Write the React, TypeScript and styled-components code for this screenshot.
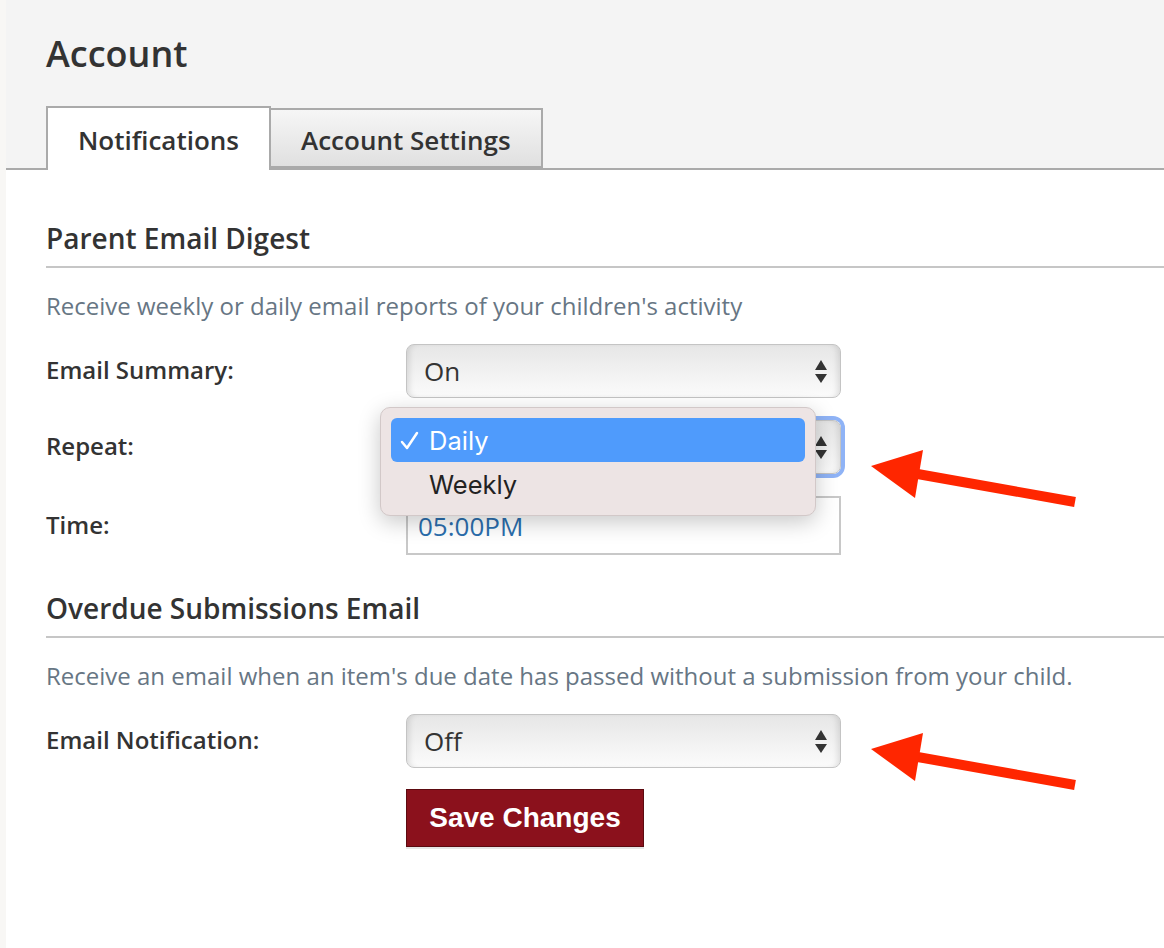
import styled, { createGlobalStyle } from "styled-components";

const GlobalStyle = createGlobalStyle`
  html, body {
    margin: 0;
    padding: 0;
    background: #f8f7f5;
  }
  * {
    box-sizing: border-box;
  }
`;

const Page = styled.div`
  margin-left: 6px;
  min-height: 948px;
  background: #ffffff;
  font-family: "Open Sans", "Noto Sans", sans-serif;
  color: #333333;
  overflow: hidden;
`;

const Header = styled.div`
  background: #f4f4f4;
  border-bottom: 2px solid #aaaaaa;
  padding: 32px 0 0 40px;
  height: 170px;
  display: flex;
  flex-direction: column;
  justify-content: space-between;
`;

const Title = styled.h1`
  margin: 0;
  font-size: 36px;
  line-height: 44px;
  font-weight: 600;
  color: #333333;
`;

const Tabs = styled.div`
  display: flex;
  align-items: flex-end;
  margin-bottom: -2px;
`;

const Tab = styled.div<{ $active?: boolean }>`
  height: ${(p) => (p.$active ? "64px" : "60px")};
  margin-bottom: ${(p) => (p.$active ? "0" : "2px")};
  padding: ${(p) => (p.$active ? "2px 30px 0" : "4px 30px 0")};
  display: flex;
  align-items: center;
  border: 2px solid #aaaaaa;
  border-bottom: ${(p) => (p.$active ? "none" : "2px solid #aaaaaa")};
  border-left: ${(p) => (p.$active ? "2px solid #aaaaaa" : "none")};
  background: ${(p) =>
    p.$active ? "#ffffff" : "linear-gradient(to bottom, #f6f6f6, #e0e0e0)"};
  font-size: 26px;
  font-weight: 600;
  color: #333333;
`;

const Content = styled.div`
  padding: 52px 0 0 40px;
`;

const SectionTitle = styled.h2<{ $first?: boolean }>`
  margin: ${(p) => (p.$first ? "0" : "37px")} 0 0;
  padding-bottom: 12px;
  border-bottom: 2px solid #c6c6c6;
  font-size: 28px;
  line-height: 32px;
  font-weight: 600;
  color: #333333;
`;

const Description = styled.p`
  margin: 24px 0 24px;
  font-size: 24px;
  line-height: 28px;
  color: #677684;
`;

const Row = styled.div`
  position: relative;
  display: grid;
  grid-template-columns: 360px 435px;
  align-items: center;
  margin-bottom: 22px;
`;

const Label = styled.label`
  font-size: 24px;
  font-weight: 600;
  color: #333333;
  margin-top: -3px;
`;

const SelectBox = styled.div<{ $focused?: boolean }>`
  position: relative;
  height: 54px;
  border: 1.5px solid #c4c4c4;
  border-radius: 8px;
  background: linear-gradient(to bottom, #e6e6e6 0%, #f2f2f2 55%, #fbfbfb 100%);
  box-shadow: inset 6px 0 6px -4px rgba(0, 0, 0, 0.12),
    inset -6px 0 6px -4px rgba(0, 0, 0, 0.12)
    ${(p) => (p.$focused ? ", 0 0 0 4px #8fb3f6" : "")};
  display: flex;
  align-items: center;
  justify-content: space-between;
  padding: 0 13px 0 17px;
  font-size: 26px;
  color: #333333;
`;

const TimeInput = styled.div`
  height: 59px;
  border: 2px solid #c8c8c8;
  display: flex;
  align-items: center;
  padding-left: 10px;
  font-size: 26px;
  color: #2b6ead;
`;

const Popup = styled.div`
  position: absolute;
  left: -27px;
  top: -14px;
  width: 436px;
  height: 109px;
  padding: 10px;
  background: #ede4e4;
  border: 1px solid #d2c8c8;
  border-radius: 10px;
  box-shadow: 0 6px 22px rgba(0, 0, 0, 0.22);
  z-index: 2;
  font-family: Inter, "Noto Sans", sans-serif;
`;

const Option = styled.div<{ $selected?: boolean }>`
  height: 44px;
  border-radius: 6px;
  display: flex;
  align-items: center;
  padding-left: 9px;
  font-size: 25.5px;
  color: ${(p) => (p.$selected ? "#ffffff" : "#222222")};
  background: ${(p) => (p.$selected ? "#4f9bfc" : "transparent")};
`;

const CheckSlot = styled.span`
  width: 29px;
  display: flex;
  align-items: center;
`;

const SaveRow = styled.div`
  padding-left: 360px;
  margin-top: -1px;
`;

const SaveButton = styled.button`
  width: 238px;
  height: 58px;
  background: #8b111c;
  border: 1px solid #5c0a10;
  box-shadow: 0 2px 0 #e6e6e6;
  color: #ffffff;
  font-family: "Liberation Sans", Arial, sans-serif;
  font-weight: 700;
  font-size: 28px;
  padding: 0;
`;

const ArrowWrap = styled.div<{ $top: number }>`
  position: absolute;
  left: 816px;
  top: ${(p) => p.$top}px;
  width: 220px;
  height: 70px;
  pointer-events: none;
`;

const Updown = () => (
  <svg width="12" height="23" viewBox="0 0 12 23">
    <path d="M6 0 L12 10 L0 10 Z" fill="#333" />
    <path d="M0 14 L12 14 L6 23 Z" fill="#333" />
  </svg>
);

const CheckMark = () => (
  <svg width="19" height="19" viewBox="0 0 19 19">
    <path
      d="M2 11 L7 17 L17 2"
      fill="none"
      stroke="#fff"
      strokeWidth="2.5"
      strokeLinecap="round"
      strokeLinejoin="round"
    />
  </svg>
);

const RedArrow = ({ top }: { top: number }) => (
  <ArrowWrap $top={top}>
    <svg width="220" height="70" viewBox="0 0 220 70">
      <line x1="50" y1="32" x2="213" y2="61" stroke="#ff2600" strokeWidth="10" />
      <path d="M9 25 L61 9 L53 57 Z" fill="#ff2600" />
    </svg>
  </ArrowWrap>
);

export default function App() {
  return (
    <>
      <GlobalStyle />
      <Page>
        <Header>
          <Title>Account</Title>
          <Tabs>
            <Tab $active>Notifications</Tab>
            <Tab>Account Settings</Tab>
          </Tabs>
        </Header>
        <Content>
          <SectionTitle $first>Parent Email Digest</SectionTitle>
          <Description>
            Receive weekly or daily email reports of your children's activity
          </Description>
          <Row>
            <Label>Email Summary:</Label>
            <SelectBox>
              On
              <Updown />
            </SelectBox>
          </Row>
          <Row>
            <Label>Repeat:</Label>
            <SelectBox $focused>
              <span />
              <Updown />
              <Popup>
                <Option $selected>
                  <CheckSlot>
                    <CheckMark />
                  </CheckSlot>
                  Daily
                </Option>
                <Option>
                  <CheckSlot />
                  Weekly
                </Option>
              </Popup>
            </SelectBox>
            <RedArrow top={21} />
          </Row>
          <Row>
            <Label>Time:</Label>
            <TimeInput>05:00PM</TimeInput>
          </Row>
          <SectionTitle>Overdue Submissions Email</SectionTitle>
          <Description>
            Receive an email when an item's due date has passed without a
            submission from your child.
          </Description>
          <Row>
            <Label>Email Notification:</Label>
            <SelectBox>
              Off
              <Updown />
            </SelectBox>
            <RedArrow top={10} />
          </Row>
          <SaveRow>
            <SaveButton>Save Changes</SaveButton>
          </SaveRow>
        </Content>
      </Page>
    </>
  );
}
